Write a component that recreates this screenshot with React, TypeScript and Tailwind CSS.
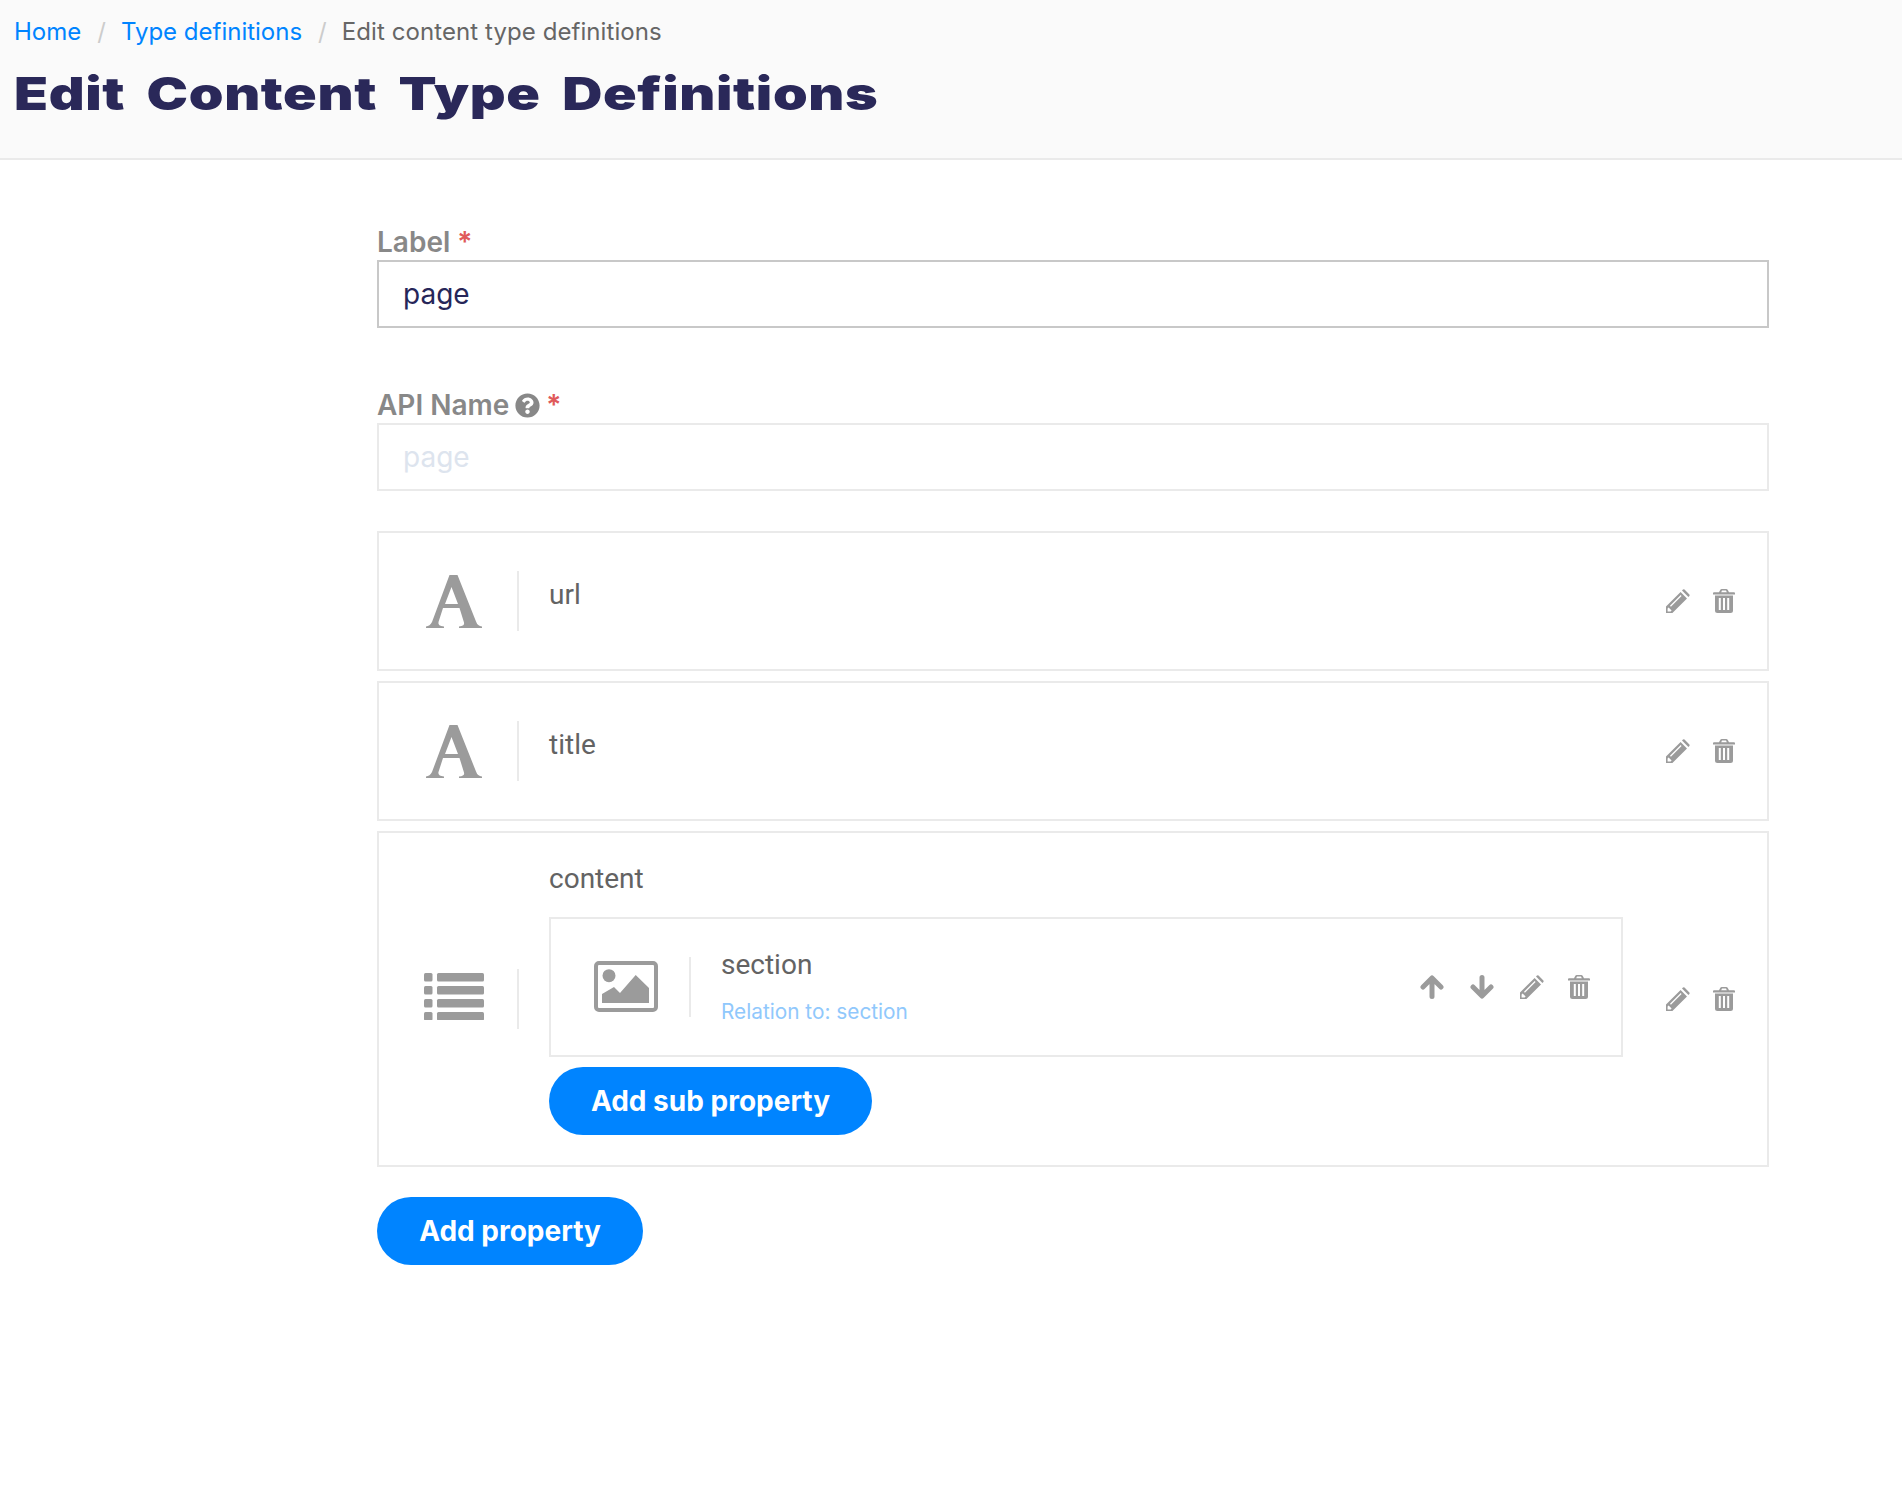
import { FaQuestionCircle } from "react-icons/fa";

const font = "font-['Inter',sans-serif]";
const nameText = "font-['Roboto',sans-serif] text-[28px] leading-[34px] text-[#636363]";

function PencilIcon() {
  return (
    <svg viewBox="0 0 24 24" className="h-6 w-6 fill-[#9b9b9b]">
      <path fillRule="evenodd" d="M0 24V17.6L14.6 3l6.4 6.4L6.4 24ZM1.6 19.4V22.4H4.6L5.6 21.4 2.6 18.4ZM4 16.8l.9.9L15.6 7l-.9-.9Z" />
      <path d="M16 1.6 17 .6Q17.7 0 18.5 .6L23.4 5.5Q24 6.3 23.4 7L22.4 8Z" />
    </svg>
  );
}

function TrashIcon() {
  return (
    <svg viewBox="0 0 22 24" className="h-6 w-[22px] fill-[#9b9b9b]">
      <path fillRule="evenodd" d="M6 3.2 7.2 .9Q7.7 0 8.8 0H13.2Q14.3 0 14.8 .9L16 3.2H21Q22 3.2 22 4.2V5.6H0V4.2Q0 3.2 1 3.2ZM8.2 3.2H13.8L13 1.6H9Z" />
      <path fillRule="evenodd" d="M2 6.6H20V21.5Q20 24 17.5 24H4.5Q2 24 2 21.5ZM5.8 9V21H7.8V9ZM10 9V21H12V9ZM14.2 9V21H16.2V9Z" />
    </svg>
  );
}

function ArrowIcon({ down }: { down?: boolean }) {
  return (
    <svg viewBox="0 0 24 24" className="h-6 w-6 fill-none stroke-[#9b9b9b] stroke-[5]" strokeLinecap="round" strokeLinejoin="round">
      <path d={down ? "M12 2.5V20.5M3 12 12 21 21 12" : "M12 21.5V3.5M3 12 12 3 21 12"} />
    </svg>
  );
}

function FontIcon() {
  return (
    <svg viewBox="0 0 56 53" className="h-[53px] w-14 fill-[#9b9b9b]">
      <path fillRule="evenodd" d="M0 53V51.5Q4 51 6 47L23.5 0H31.5L50 46.5Q51.5 51 56 51.5V53H33V51.5Q39 51 38 47.5L33.5 33H17L12.5 47Q11.5 51 18 51.5V53ZM19 29H32L25.5 12Z" />
    </svg>
  );
}

function ListIcon() {
  return (
    <svg viewBox="0 0 60 47" className="mb-[5px] h-[47px] w-[60px] fill-[#9b9b9b]">
      <rect x="0" y="0" width="8.5" height="8.5" rx="1.5" />
      <rect x="13" y="0" width="47" height="8.5" rx="1.5" />
      <rect x="0" y="13" width="8.5" height="8.5" rx="1.5" />
      <rect x="13" y="13" width="47" height="8.5" rx="1.5" />
      <rect x="0" y="26" width="8.5" height="8.5" rx="1.5" />
      <rect x="13" y="26" width="47" height="8.5" rx="1.5" />
      <rect x="0" y="39" width="8.5" height="8.5" rx="1.5" />
      <rect x="13" y="39" width="47" height="8.5" rx="1.5" />
    </svg>
  );
}

function ImageIcon() {
  return (
    <svg viewBox="0 0 64 51" className="h-[51px] w-16">
      <rect x="2" y="2" width="60" height="47" rx="3" fill="none" stroke="#9b9b9b" strokeWidth="4" />
      <circle cx="15" cy="14.7" r="6.5" fill="#9b9b9b" />
      <path d="M8 42V33L20 26 26 32 41.7 14 55 27V42Z" fill="#9b9b9b" />
    </svg>
  );
}

function Divider() {
  return <div className="h-[60px] w-0.5 shrink-0 bg-[#eaeaea]" />;
}

function IconCell({ children }: { children: React.ReactNode }) {
  return <div className="flex w-[138px] shrink-0 items-center justify-center pl-[14px] pr-[2px]">{children}</div>;
}

function RowActions() {
  return (
    <div className="flex items-center gap-[23px] pr-[32px]">
      <PencilIcon />
      <TrashIcon />
    </div>
  );
}

function PropertyCard({ icon, name }: { icon: React.ReactNode; name: string }) {
  return (
    <div className="flex h-[140px] items-center border-2 border-[#eaeaea]">
      <IconCell>{icon}</IconCell>
      <Divider />
      <div className={`flex-1 pb-3 pl-[30px] ${nameText}`}>{name}</div>
      <RowActions />
    </div>
  );
}

export default function App() {
  return (
    <div className={`min-h-[1490px] overflow-hidden bg-white ${font}`}>
      <header className="h-40 border-b-2 border-[#eaeaea] bg-[#fafafa] px-[14px] pt-[16px]">
        <nav className="flex items-center text-[24px] leading-8 text-[#666]">
          <a className="text-[#0084ff]">Home</a>
          <span className="pr-[15px] pl-4 text-[#ccc]">/</span>
          <a className="text-[#0084ff]">Type definitions</a>
          <span className="pr-[15px] pl-4 text-[#ccc]">/</span>
          <span className="tracking-[0.08px]">Edit content type definitions</span>
        </nav>
        <h1 className="mt-5 w-fit origin-left scale-x-[1.235] text-[45px] leading-[52px] font-black tracking-[0.5px] [word-spacing:8px] text-[#2a2859]">
          Edit Content Type Definitions
        </h1>
      </header>

      <main className="ml-[377px] w-[1392px] pt-[65px]">
        <label className="block pb-px text-[28px] leading-[34px] font-semibold text-[#888]">
          Label <span className="text-[#e05a5a]">*</span>
        </label>
        <input
          readOnly
          value="page"
          className="block h-[68px] w-full border-2 border-[#c8c8c8] px-6 text-[28px] text-[#262659] outline-none"
        />

        <label className="mt-[60px] flex items-center gap-1.5 pb-px text-[28px] leading-[34px] font-semibold text-[#888]">
          API Name <FaQuestionCircle className="h-[25px] w-[25px]" /> <span className="text-[#e05a5a]">*</span>
        </label>
        <input
          disabled
          placeholder="page"
          className="block h-[68px] w-full border-2 border-[#eaeaea] bg-white px-6 text-[28px] outline-none placeholder:text-[#dde4ee]"
        />

        <div className="mt-10 flex flex-col gap-2.5">
          <PropertyCard icon={<FontIcon />} name="url" />
          <PropertyCard icon={<FontIcon />} name="title" />

          <div className="flex h-[336px] items-center border-2 border-[#eaeaea]">
            <IconCell>
              <ListIcon />
            </IconCell>
            <Divider />
            <div className="w-[1104px] shrink-0 pb-[2px] pl-[30px]">
              <div className={nameText}>content</div>
              <div className="mt-[21px] flex h-[140px] w-[1074px] items-center border-2 border-[#eaeaea]">
                <IconCell>
                  <ImageIcon />
                </IconCell>
                <Divider />
                <div className="flex-1 pl-[30px]">
                  <div className={nameText}>section</div>
                  <div className="mt-4 text-[20.8px] leading-[28px] text-[#90c8fc]">Relation to: section</div>
                </div>
                <div className="flex items-center gap-[26px] pr-[31px]">
                  <ArrowIcon />
                  <ArrowIcon down />
                  <div className="flex items-center gap-6">
                    <PencilIcon />
                    <TrashIcon />
                  </div>
                </div>
              </div>
              <button className="mt-2.5 h-[68px] w-[323px] rounded-full bg-[#0084ff] text-[28px] font-bold text-white">
                Add sub property
              </button>
            </div>
            <div className="ml-auto">
              <RowActions />
            </div>
          </div>
        </div>

        <button className="mt-[30px] h-[68px] w-[266px] rounded-full bg-[#0084ff] text-[28px] font-bold text-white">
          Add property
        </button>
      </main>
    </div>
  );
}
